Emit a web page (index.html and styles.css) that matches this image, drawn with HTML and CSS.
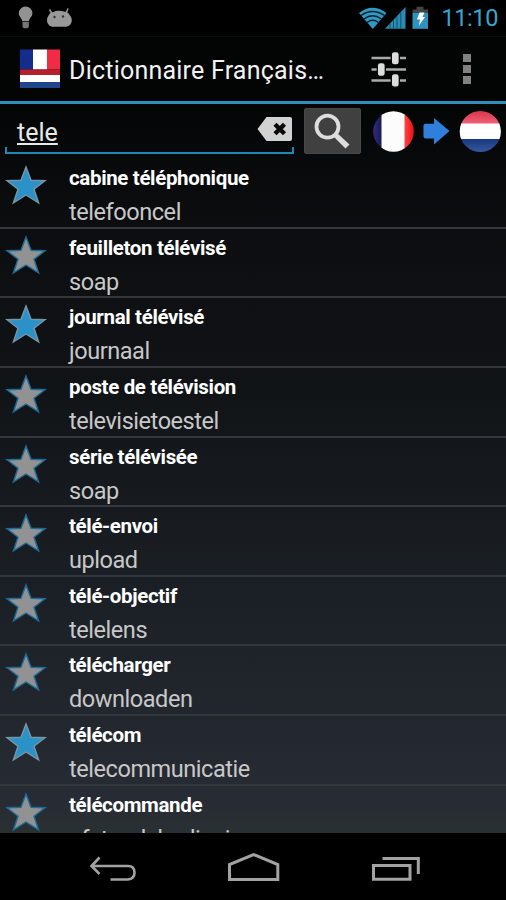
FILE: index.html
```html
<!DOCTYPE html>
<html lang="fr">
<head>
<meta charset="utf-8">
<title>Dictionnaire Français</title>
<link rel="stylesheet" href="styles.css">
</head>
<body>
<svg class="defs" width="0" height="0" aria-hidden="true">
  <symbol id="star" viewBox="0 0 44 42"><path d="M22 2.2L27.3 16L42 16.5L30.4 25.5L35.2 39.8L22 31.5L8.8 39.8L13.6 25.5L2 16.5L16.7 16Z"/></symbol>
</svg>
<div class="screen">
  <header class="status">
    <svg width="80" height="36" viewBox="0 0 80 36">
      <g fill="#929292"><path d="M25.6 6.4a6.8 6.8 0 0 0-6.8 6.8c0 3.4 3 4.8 3.6 8h6.4c.6-3.2 3.6-4.6 3.6-8a6.8 6.8 0 0 0-6.8-6.8z"/><path d="M22.5 22h6.3v5l-1.5 1.3H24L22.500 27z" fill="#777"/></g>
      <path d="M52 13.500L49.500 9.500M66 13.500L68 8.500" stroke="#999" stroke-width="1.500"/>
      <path d="M47 20c0-3 1.500-4 2.500-6 1-1.800 3-1.500 4.500-2.300 2.500-1.200 7-1.200 10-.2 2 .5 4 .7 5 2.500.8 1.700 2.800 3 2.800 6 0 4-2.800 6.800-6.800 6.800H53.500c-4 0-6.500-3-6.500-6.800z" fill="#999"/>
      <circle cx="54.500" cy="17" r="1.200" fill="#333"/><circle cx="63" cy="16.500" r="1.200" fill="#333"/>
    </svg>
    <div class="status-right">
      <svg width="75" height="36" viewBox="362 0 75 36">
        <path d="M364 13Q377.500 2.500 391.500 13L377.800 29Z" fill="#3099c4"/>
        <g fill="none" stroke="#06202c" stroke-width="1.400"><path d="M366 15.500Q377.500 7.500 389.500 15.500M369 19Q377.500 12.500 386.500 19M372 22.500Q377.500 18 383.500 22.500"/></g>
        <path d="M390 28.800L410.500 7V28.800Z" fill="#2a8cb3"/>
        <path d="M395 24V29M398.500 20V29M402 16.500V29M405.800 12.500V29" stroke="#13506a"/>
        <path d="M417.500 13V9.500h4V6.800h7v2.700h4.500V13z" fill="#444"/><path d="M417.500 13h15.500v15.800h-15.500z" fill="#2e93bd"/>
        <path d="M424.500 12.500h5l-2 4.500h2.500l-6 8.500 1-6h-3z" fill="#fff"/>
      </svg>
      <span class="clock">11:10</span>
    </div>
  </header>
  <div class="appbar">
    <svg class="logo" width="40" height="40" viewBox="0 0 40 40">
      <path fill="#142c8c" d="M0 .5h13v20H0z"/><path fill="#fff" d="M13 .5h14v20H13z"/><path fill="#ef2b45" d="M27 .5h13v20H27z"/>
      <path fill="#b6202c" d="M0 20.500h40V26H0z"/><path fill="#fff" d="M0 26h40v7H0z"/><path fill="#20458c" d="M0 33h40v6H0z"/>
    </svg>
    <h1>Dictionnaire Français…</h1>
    <svg class="tune" width="36" height="37" viewBox="0 0 36 37">
      <g stroke="#aaa" stroke-width="2.500"><path d="M.5 7H35M.5 18.500H35M.5 29.500H35"/></g>
      <g fill="#ddd" stroke="#050505" stroke-width="1.300"><rect x="20.300" y=".5" width="8" height="13.500" rx="3"/><rect x="6.300" y="11.500" width="8" height="14" rx="3"/><rect x="20.300" y="22.700" width="8" height="13.500" rx="3"/></g>
    </svg>
    <div class="dots"><i></i><i></i><i></i></div>
  </div>
  <div class="search">
    <div class="field"><span class="query">tele</span>
      <svg width="36" height="26" viewBox="0 0 36 26"><path d="M.500 13L9.500 1H33q2 0 2 2V23q0 2-2 2H9.500Z" fill="#d2d2d2"/><path d="M18 8.200L27.500 17.800M27.500 8.200L18 17.800" stroke="#090909" stroke-width="4.400"/></svg>
    </div>
    <div class="find"><svg width="56" height="46" viewBox="0 0 56 46"><circle cx="23.500" cy="18.700" r="11" fill="none" stroke="#ddd" stroke-width="3.800"/><path d="M31 27L33 25L45.500 36.500L41.500 40.500L29.500 28.500Z" fill="#ddd"/></svg></div>
    <svg class="langs" width="128" height="46" viewBox="373 108 128 46">
      <defs>
        <clipPath id="fr"><circle cx="393.500" cy="131.500" r="20.300"/></clipPath><clipPath id="nl"><circle cx="480.300" cy="131.500" r="20.600"/></clipPath>
        <linearGradient id="blue"><stop offset="0" stop-color="#33337c"/><stop offset="1" stop-color="#171758"/></linearGradient>
        <linearGradient id="red"><stop offset="0" stop-color="#f44"/><stop offset="1" stop-color="#e00008"/></linearGradient>
        <linearGradient id="pink" x2="0" y2="1"><stop offset="0" stop-color="#d72b42"/><stop offset="1" stop-color="#ef6176"/></linearGradient>
        <linearGradient id="navy" x2="0" y2="1"><stop offset="0" stop-color="#193880"/><stop offset="1" stop-color="#3b5fa5"/></linearGradient>
      </defs>
      <g clip-path="url(#fr)"><path fill="url(#blue)" d="M372 108h10v46h-10z"/><path fill="#fcfcfc" d="M381.500 108h23.500v46h-23.500z"/><path fill="url(#red)" d="M404.500 108h12v46h-12z"/></g>
      <path d="M425.500 123.700h8.500V118L449.500 131L434 144.500V138.500h-8.500q-2 0-2-2V125.700q0-2 2-2z" fill="#2e80dc"/>
      <g clip-path="url(#nl)"><path fill="url(#pink)" d="M458 108h44v16h-44z"/><path fill="#fff" d="M458 123.500h44V139h-44z"/><path fill="url(#navy)" d="M458 139h44v16h-44z"/></g>
    </svg>
  </div>
  <ul class="results">
    <li><svg class="star on"><use href="#star"/></svg><div><b>cabine téléphonique</b><span>telefooncel</span></div></li>
    <li><svg class="star"><use href="#star"/></svg><div><b>feuilleton télévisé</b><span>soap</span></div></li>
    <li><svg class="star on"><use href="#star"/></svg><div><b>journal télévisé</b><span>journaal</span></div></li>
    <li><svg class="star"><use href="#star"/></svg><div><b>poste de télévision</b><span>televisietoestel</span></div></li>
    <li><svg class="star"><use href="#star"/></svg><div><b>série télévisée</b><span>soap</span></div></li>
    <li><svg class="star"><use href="#star"/></svg><div><b>télé-envoi</b><span>upload</span></div></li>
    <li><svg class="star"><use href="#star"/></svg><div><b>télé-objectif</b><span>telelens</span></div></li>
    <li><svg class="star"><use href="#star"/></svg><div><b>télécharger</b><span>downloaden</span></div></li>
    <li><svg class="star on"><use href="#star"/></svg><div><b>télécom</b><span>telecommunicatie</span></div></li>
    <li><svg class="star"><use href="#star"/></svg><div><b>télécommande</b><span>afstandsbediening</span></div></li>
  </ul>
  <nav class="navbar">
    <svg width="506" height="67" viewBox="0 833 506 67" fill="none" stroke="#a2a2a2" stroke-width="3">
      <path d="M99.500 857.500L91.500 866L99.500 874M92 866H128Q134.500 866 134.500 872.500T128 879.500H110.500" stroke-width="2.600"/>
      <path d="M229.500 879.500V864.500L253.500 854.500L277.800 864.500V879.500Z"/>
      <path d="M373.500 865.500H410V879.300H373.500ZM382.500 858.500H418.300V874"/>
    </svg>
  </nav>
</div>
</body>
</html>
```
FILE: styles.css
```css
* { box-sizing: border-box; }
body { margin: 0; background: #000; font-family: Roboto, "Liberation Sans", sans-serif; }
.defs { display: block; height: 0; }
svg { display: block; flex: none; }
.screen { width: 506px; height: 900px; display: flex; flex-direction: column; overflow: hidden; background: linear-gradient(#030404 100px, #0b0c0e 200px, #111417 390px, #1b2026 600px, #272b33 800px, #293032 833px); }
.status { height: 36px; flex: none; display: flex; justify-content: space-between; background: #000; }
.status-right { display: flex; padding-right: 8px; }
.clock { width: 58px; margin-left: 3px; font-size: 23.5px; line-height: 37px; letter-spacing: -0.4px; color: #37a5d2; white-space: nowrap; text-align: right; }
.status-right svg { margin-right: 5px; }
.appbar { height: 68px; flex: none; display: flex; align-items: center; padding: 0 35px 0 20px; background: #030404; border-bottom: 3px solid #318fbd; border-top: 1px solid #0b0b0b; }
.logo { margin-top: 0; }
h1 { margin: 4px 0 0 9px; width: 292px; font-weight: 400; font-size: 25px; line-height: 34px; letter-spacing: 0.22px; color: #f2f2f2; white-space: nowrap; }
.tune { margin: 0 0 0 10px; }
.dots { margin: 0 0 0 auto; display: grid; gap: 3px; }
.dots i { width: 8px; height: 8px; background: #818181; }
.search { height: 55px; flex: none; display: flex; align-items: flex-start; padding: 4px 5px 0 5px; }
.field { width: 289px; height: 46px; display: flex; justify-content: space-between; padding: 8px 1px 0 12px; border-bottom: 2.5px solid #1c89b5; background: linear-gradient(#1c89b5, #1c89b5) left bottom / 2px 5px no-repeat, linear-gradient(#1c89b5, #1c89b5) right bottom / 2px 5px no-repeat; }
.query { font-size: 25px; line-height: 34px; color: #e8e8e8; text-decoration: underline; text-decoration-thickness: 2px; text-underline-offset: 2px; }
.find { width: 57px; height: 46px; margin-left: 10px; background: #404040; border: 1px solid #484848; border-radius: 2px; }
.find svg { margin: -1px; }
.langs { margin-left: auto; }
.results { height: 674px; flex: none; margin: 0; padding: 0; list-style: none; overflow: hidden; }
.results li { height: 69.65px; display: flex; border-bottom: 2px solid #33373b; }
.star { width: 42px; height: 40px; margin: 6px 22px 0 5px; fill: #929292; stroke: #1c6c98; stroke-width: 1.5px; }
.star.on { fill: #2b91c9; stroke: #7895a5; }
.results b, .results span { display: block; white-space: nowrap; }
.results b { padding-top: 4px; font-size: 20.5px; line-height: 30px; letter-spacing: -0.35px; color: #fff; }
.results span { font-size: 23.5px; line-height: 34px; padding-top: 2px; letter-spacing: -0.44px; color: #c8c8c8; }
.navbar { height: 67px; flex: none; background: #000; }
```
